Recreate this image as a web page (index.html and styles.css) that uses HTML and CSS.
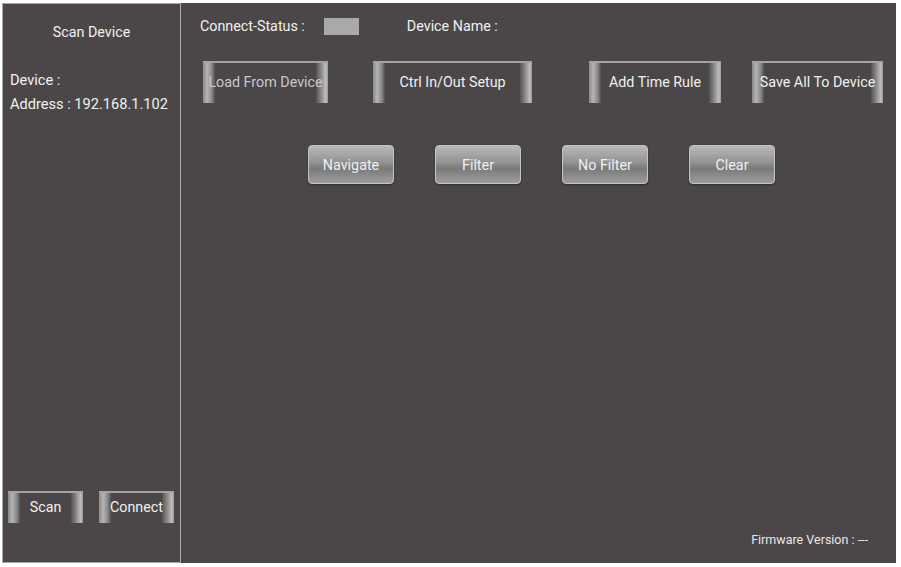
FILE: index.html
```html
<!DOCTYPE html>
<html lang="en">
<head>
  <meta charset="UTF-8">
  <title>Device Setup</title>
  <link rel="stylesheet" href="styles.css">
</head>
<body>
  <div class="screen">
    <div class="side">
      <div class="side-title">Scan Device</div>
      <div class="side-info">
        <p>Device :</p>
        <p>Address : 192.168.1.102</p>
      </div>
      <div class="side-actions">
        <button class="tab-btn scan"><span>Scan</span></button>
        <button class="tab-btn connect"><span>Connect</span></button>
      </div>
    </div>
    <div class="main">
      <div class="status-bar">
        <span>Connect-Status :</span>
        <span class="status-box"></span>
        <span class="device-name">Device Name :</span>
      </div>
      <div class="tab-row">
        <button class="tab-btn load dim"><span>Load From Device</span></button>
        <button class="tab-btn ctrl"><span>Ctrl In/Out Setup</span></button>
        <button class="tab-btn rule"><span>Add Time Rule</span></button>
        <button class="tab-btn save"><span>Save All To Device</span></button>
      </div>
      <div class="tool-row">
        <button class="tool-btn">Navigate</button>
        <button class="tool-btn">Filter</button>
        <button class="tool-btn">No Filter</button>
        <button class="tool-btn">Clear</button>
      </div>
      <div class="firmware">Firmware Version : ---</div>
    </div>
  </div>
</body>
</html>
```

FILE: styles.css
```css
body {
  margin: 0;
  background: #fff;
  font-family: Roboto, "Liberation Sans", sans-serif;
  color: #f0f0f0;
}
.screen {
  display: flex;
  height: 560px;
  margin: 3px 5px 4px 2px;
  background: #4b4748;
}
.side {
  width: 177px;
  border: 1px solid #a9a9a9;
  display: flex;
  flex-direction: column;
}
.side-title {
  text-align: center;
  font-size: 14.3px;
  margin-top: 20px;
}
.side-info {
  margin-top: 32px;
  padding-left: 7px;
  font-size: 14.6px;
}
.side-info p {
  margin: 0 0 7px;
  line-height: 17px;
}
.side-actions {
  margin-top: auto;
  margin-bottom: 39px;
  display: flex;
  padding-left: 5px;
  gap: 16px;
}
.main {
  flex: 1;
  position: relative;
  margin-left: 1px;
}
.status-bar {
  display: flex;
  align-items: center;
  padding: 14px 0 0 18px;
  font-size: 14.3px;
  height: 18px;
}
.status-box {
  width: 35px;
  height: 17px;
  background: #a9a9a9;
  margin-left: 19px;
}
.device-name {
  margin-left: 48px;
}
button {
  font-family: Roboto, "Liberation Sans", sans-serif;
  font-size: 14.3px;
  color: #f0f0f0;
  cursor: pointer;
}
.tab-btn {
  position: relative;
  height: 42px;
  padding: 0 0 2px;
  border: none;
  border-top: 2px solid #a4a4a4;
  background: transparent;
  white-space: nowrap;
}
.tab-btn span {
  position: relative;
  z-index: 1;
}
.tab-btn::before,
.tab-btn::after {
  content: "";
  position: absolute;
  top: 0;
  bottom: 0;
  width: 12px;
}
.tab-btn::before {
  left: 0;
  background: linear-gradient(to right, #8a8a8a, #b4b4b4 35%, #8c8c8c 70%, #56524f);
}
.tab-btn::after {
  right: 0;
  background: linear-gradient(to right, #56524f, #858585 40%, #bdbdbd 80%, #9a9a9a);
}
.tab-btn.dim {
  color: #c8c8c8;
}
.tab-row {
  display: flex;
  margin-top: 26px;
  padding-left: 21px;
}
.tab-row .load { width: 125px; }
.tab-row .ctrl { width: 159px; margin-left: 45px; }
.tab-row .rule { width: 132px; margin-left: 57px; }
.tab-row .save { width: 131px; margin-left: 31px; }
.side-actions .tab-btn {
  width: 75px;
  height: 32px;
}
.tool-row {
  display: flex;
  gap: 41px;
  margin-top: 42px;
  padding-left: 126px;
}
.tool-btn {
  width: 86px;
  height: 39px;
  border: 1px solid #c4c4c4;
  border-radius: 4px;
  background: linear-gradient(#b9b9b9, #929292 45%, #7a7a7a 60%, #9c9c9c);
  box-shadow: 0 1px 2px rgba(0, 0, 0, 0.4);
}
.firmware {
  position: absolute;
  right: 28px;
  bottom: 16px;
  font-size: 12.5px;
  color: #e8e8e8;
}
```
